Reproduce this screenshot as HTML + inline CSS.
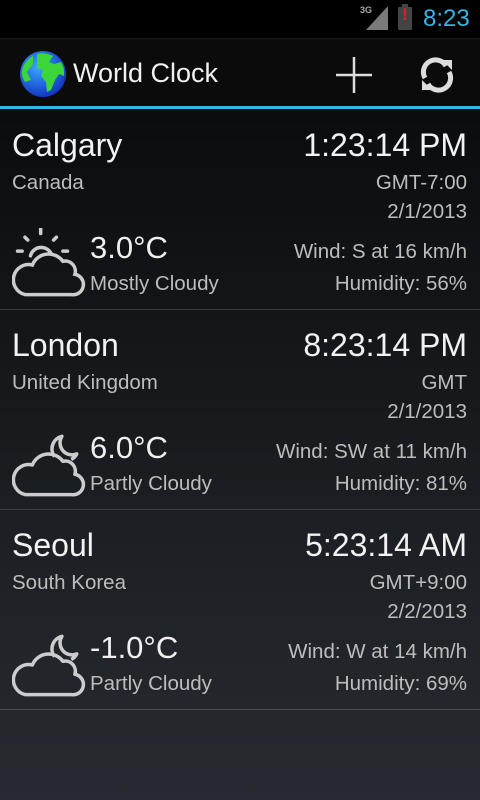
<!DOCTYPE html>
<html><head><style>
*{margin:0;padding:0;box-sizing:border-box}
body{width:480px;height:800px;overflow:hidden;position:relative;font-family:"Liberation Sans",sans-serif;background:linear-gradient(#0b0c0e 110px,#272b31 800px)}
.a{position:absolute;white-space:nowrap}
.r{text-align:right;right:13px}
.big{font-size:32px;color:#f2f2f2}
.sm{font-size:20.5px;color:#bdbdbd}
.tmp{font-size:31px;color:#f0f0f0}
.div{position:absolute;left:0;right:0;height:1px;background:#3a3d42}
</style></head><body>
<div class="a" style="left:0;top:0;width:480px;height:38px;background:#000"></div>
<div class="a" style="left:0;top:38px;width:480px;height:68px;background:#0b0b0b;border-top:1px solid #1a1a1a"></div>
<div class="a" style="left:0;top:106px;width:480px;height:3px;background:#33b5e5"></div>
<!-- status -->
<div class="a" style="left:360px;top:5px;font-size:9px;color:#aaa;font-weight:bold">3G</div>
<svg class="a" style="left:366px;top:6px" width="22" height="24"><polygon points="22,0 22,24 0,24" fill="#7a7a7a"/></svg>
<div class="a" style="left:398px;top:7px;width:14px;height:23px;background:#444;border-radius:1px"></div>
<div class="a" style="left:402px;top:4px;width:6px;height:3px;background:#444"></div>
<div class="a" style="left:398px;top:5px;font-size:17px;font-weight:bold;color:#e02020;width:14px;text-align:center">!</div>
<div class="a" style="left:423px;top:5px;font-size:24px;color:#33b5e5">8:23</div>
<!-- action bar -->
<svg class="a" style="left:19px;top:50px" width="48" height="48" viewBox="0 0 48 48">
<defs><radialGradient id="g" cx="0.4" cy="0.35" r="0.7"><stop offset="0" stop-color="#39a8ff"/><stop offset="1" stop-color="#1030c0"/></radialGradient></defs>
<circle cx="24" cy="24" r="23" fill="url(#g)"/>
<path d="M18 4 Q26 2 34 6 L30 12 L35 14 L42 12 Q46 18 45 26 L40 24 L36 30 L32 40 L28 42 L27 32 L22 26 L24 20 L18 18 Z" fill="#3dd63a"/>
<path d="M3 20 Q6 10 14 6 L14 14 L8 22 L12 30 L6 32 Q2 26 3 20Z" fill="#3dd63a"/>
</svg>
<div class="a" style="left:73px;top:58px;font-size:27px;color:#f0f0f0">World Clock</div>
<svg class="a" style="left:335px;top:56px" width="38" height="38"><path d="M19 1V37M1 19H37" stroke="#ddd" stroke-width="2.5"/></svg>
<svg class="a" style="left:418px;top:56px" width="38" height="38" viewBox="0 0 38 38" fill="none" stroke="#ddd" stroke-width="5">
<path d="M7 22 A12 12 0 0 1 28 10"/><path d="M31 16 A12 12 0 0 1 10 28"/>
<polygon points="24,4 34,4 34,14" fill="#ddd" stroke="none"/><polygon points="4,24 4,34 14,34" fill="#ddd" stroke="none"/>
</svg>

<!-- rows -->
<div class="a big" style="left:12px;top:127px">Calgary</div>
<div class="a big r" style="top:127px">1:23:14 PM</div>
<div class="a sm" style="left:12px;top:171px">Canada</div>
<div class="a sm r" style="top:171px">GMT-7:00</div>
<div class="a sm r" style="top:200px">2/1/2013</div>
<div class="a tmp" style="left:90px;top:230px">3.0°C</div>
<div class="a sm" style="left:90px;top:272px">Mostly Cloudy</div>
<div class="a sm r" style="top:240px">Wind: S at 16 km/h</div>
<div class="a sm r" style="top:272px">Humidity: 56%</div>
<svg class="a" style="left:12px;top:228px" width="74" height="74" viewBox="0 0 80 80" fill="none" stroke="#ccc" stroke-width="3.8" stroke-linecap="round">
<path d="M31 1v5M14 10l3 3M48 10l-3 3M6 25h5M55 25h5"/>
<path d="M20 30 A12 12 0 0 1 42 27"/>
<path d="M14 72 H64 A11 11 0 0 0 68 50 A11 11 0 0 0 55 36 A19 19 0 0 0 22 40 A16 16 0 0 0 14 72 Z"/>
</svg>

<div class="div" style="top:309px"></div>
<div class="a big" style="left:12px;top:327px">London</div>
<div class="a big r" style="top:327px">8:23:14 PM</div>
<div class="a sm" style="left:12px;top:371px">United Kingdom</div>
<div class="a sm r" style="top:371px">GMT</div>
<div class="a sm r" style="top:400px">2/1/2013</div>
<div class="a tmp" style="left:90px;top:430px">6.0°C</div>
<div class="a sm" style="left:90px;top:472px">Partly Cloudy</div>
<div class="a sm r" style="top:440px">Wind: SW at 11 km/h</div>
<div class="a sm r" style="top:472px">Humidity: 81%</div>
<svg class="a" style="left:12px;top:428px" width="74" height="74" viewBox="0 0 80 80" fill="none" stroke="#ccc" stroke-width="3.8" stroke-linejoin="round">
<path d="M46 31 A14 14 0 0 1 54 9 A13 13 0 0 0 70 28 A14 14 0 0 1 64 34"/>
<path d="M14 72 H64 A11 11 0 0 0 68 50 A11 11 0 0 0 55 36 A19 19 0 0 0 22 40 A16 16 0 0 0 14 72 Z"/>
</svg>

<div class="div" style="top:509px"></div>
<div class="a big" style="left:12px;top:527px">Seoul</div>
<div class="a big r" style="top:527px">5:23:14 AM</div>
<div class="a sm" style="left:12px;top:571px">South Korea</div>
<div class="a sm r" style="top:571px">GMT+9:00</div>
<div class="a sm r" style="top:600px">2/2/2013</div>
<div class="a tmp" style="left:90px;top:630px">-1.0°C</div>
<div class="a sm" style="left:90px;top:672px">Partly Cloudy</div>
<div class="a sm r" style="top:640px">Wind: W at 14 km/h</div>
<div class="a sm r" style="top:672px">Humidity: 69%</div>
<svg class="a" style="left:12px;top:628px" width="74" height="74" viewBox="0 0 80 80" fill="none" stroke="#ccc" stroke-width="3.8" stroke-linejoin="round">
<path d="M46 31 A14 14 0 0 1 54 9 A13 13 0 0 0 70 28 A14 14 0 0 1 64 34"/>
<path d="M14 72 H64 A11 11 0 0 0 68 50 A11 11 0 0 0 55 36 A19 19 0 0 0 22 40 A16 16 0 0 0 14 72 Z"/>
</svg>
<div class="div" style="top:709px;background:#4a4d52"></div>
</body></html>
